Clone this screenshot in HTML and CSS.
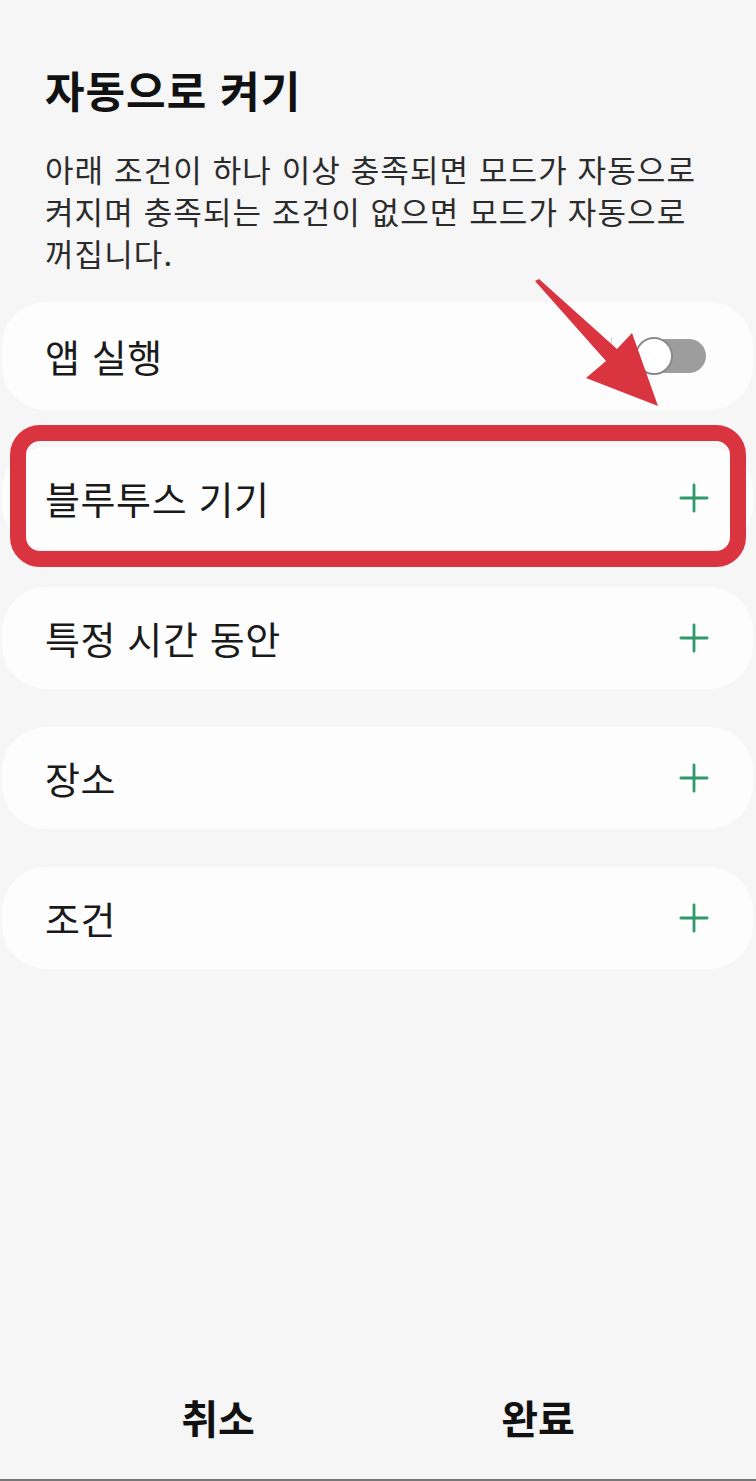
FILE: index.html
```html
<!DOCTYPE html>
<html lang="ko">
<head>
<meta charset="utf-8">
<link rel="stylesheet" href="styles.css">
</head>
<body>
<div class="page">
  <header class="head">
    <h1 class="title">자동으로 켜기</h1>
    <p class="desc">아래 조건이 하나 이상 충족되면 모드가 자동으로 켜지며 충족되는 조건이 없으면 모드가 자동으로 꺼집니다.</p>
  </header>

  <ul class="cards">
    <li class="card card-tall">
      <span class="label">앱 실행</span>
      <span class="toggle-wrap">
        <span class="divider"></span>
        <span class="toggle"><span class="knob"></span></span>
      </span>
    </li>
    <li class="card highlighted">
      <span class="label">블루투스 기기</span>
      <svg class="plus" viewBox="0 0 32 32"><path d="M16 2V30M2 16H30"/></svg>
      <span class="red-box"></span>
    </li>
    <li class="card">
      <span class="label">특정 시간 동안</span>
      <svg class="plus" viewBox="0 0 32 32"><path d="M16 2V30M2 16H30"/></svg>
    </li>
    <li class="card">
      <span class="label">장소</span>
      <svg class="plus" viewBox="0 0 32 32"><path d="M16 2V30M2 16H30"/></svg>
    </li>
    <li class="card">
      <span class="label">조건</span>
      <svg class="plus" viewBox="0 0 32 32"><path d="M16 2V30M2 16H30"/></svg>
    </li>
  </ul>

  <footer class="actions">
    <button class="btn">취소</button>
    <button class="btn">완료</button>
  </footer>

  <svg class="arrow" width="756" height="1481" viewBox="0 0 756 1481">
    <polygon points="535,281 539,279 617,349 632,333 658,406 586,378 606,361"/>
  </svg>
</div>
</body>
</html>
```

FILE: styles.css
```css
* { box-sizing: border-box; }
html, body {
  margin: 0;
  padding: 0;
  background: #f6f6f6;
}
body {
  font-family: "Noto Sans CJK KR", "Noto Sans", sans-serif;
  color: #111;
}
.page {
  position: relative;
  width: 756px;
  height: 1481px;
  display: flex;
  flex-direction: column;
  border-bottom: 2px solid #777;
}
.head {
  padding: 61px 50px 0 45px;
}
.title {
  margin: 0;
  font-size: 43px;
  font-weight: 700;
  line-height: 56px;
  letter-spacing: 1px;
}
.desc {
  margin: 31px 0 0 0;
  font-size: 31px;
  line-height: 42px;
  color: #2b2b2b;
  letter-spacing: 1.1px;
}
.cards {
  list-style: none;
  margin: 28px 3px 0 2px;
  padding: 0;
  display: flex;
  flex-direction: column;
  gap: 38px;
}
.card {
  position: relative;
  height: 102px;
  background: #fdfdfd;
  border-radius: 44px;
  display: flex;
  align-items: center;
  justify-content: space-between;
  padding: 0 44px 0 43px;
}
.card-tall {
  height: 108px;
  margin-bottom: -1px;
}
.label {
  font-size: 38px;
  line-height: 1;
  color: #1a1a1a;
  letter-spacing: 0.6px;
}
.plus {
  width: 30px;
  height: 30px;
  fill: none;
  stroke: #2f9a6b;
  stroke-width: 3;
  stroke-linecap: round;
}
.toggle-wrap {
  display: flex;
  align-items: center;
  gap: 25px;
}
.divider {
  width: 1px;
  height: 38px;
  background: #d6d6d6;
}
.toggle {
  position: relative;
  width: 69px;
  height: 34px;
  border-radius: 17px;
  background: #9d9d9d;
  margin-right: 3px;
}
.knob {
  position: absolute;
  left: -2px;
  top: -2px;
  width: 38px;
  height: 38px;
  border-radius: 50%;
  background: #fff;
  border: 2px solid #8a8a8a;
}
.red-box {
  position: absolute;
  left: 8px;
  right: 7px;
  top: -22px;
  bottom: -18px;
  border: 16px solid #db3441;
  border-radius: 30px;
}
.actions {
  margin-top: auto;
  padding: 0 58px 26px;
  display: flex;
}
.btn {
  flex: 1;
  height: 72px;
  border: 0;
  background: transparent;
  font-family: inherit;
  font-size: 40px;
  font-weight: 700;
  color: #111;
  padding: 0;
}
.arrow {
  position: absolute;
  left: 0;
  top: 0;
  pointer-events: none;
}
.arrow polygon {
  fill: #db3441;
}
```
